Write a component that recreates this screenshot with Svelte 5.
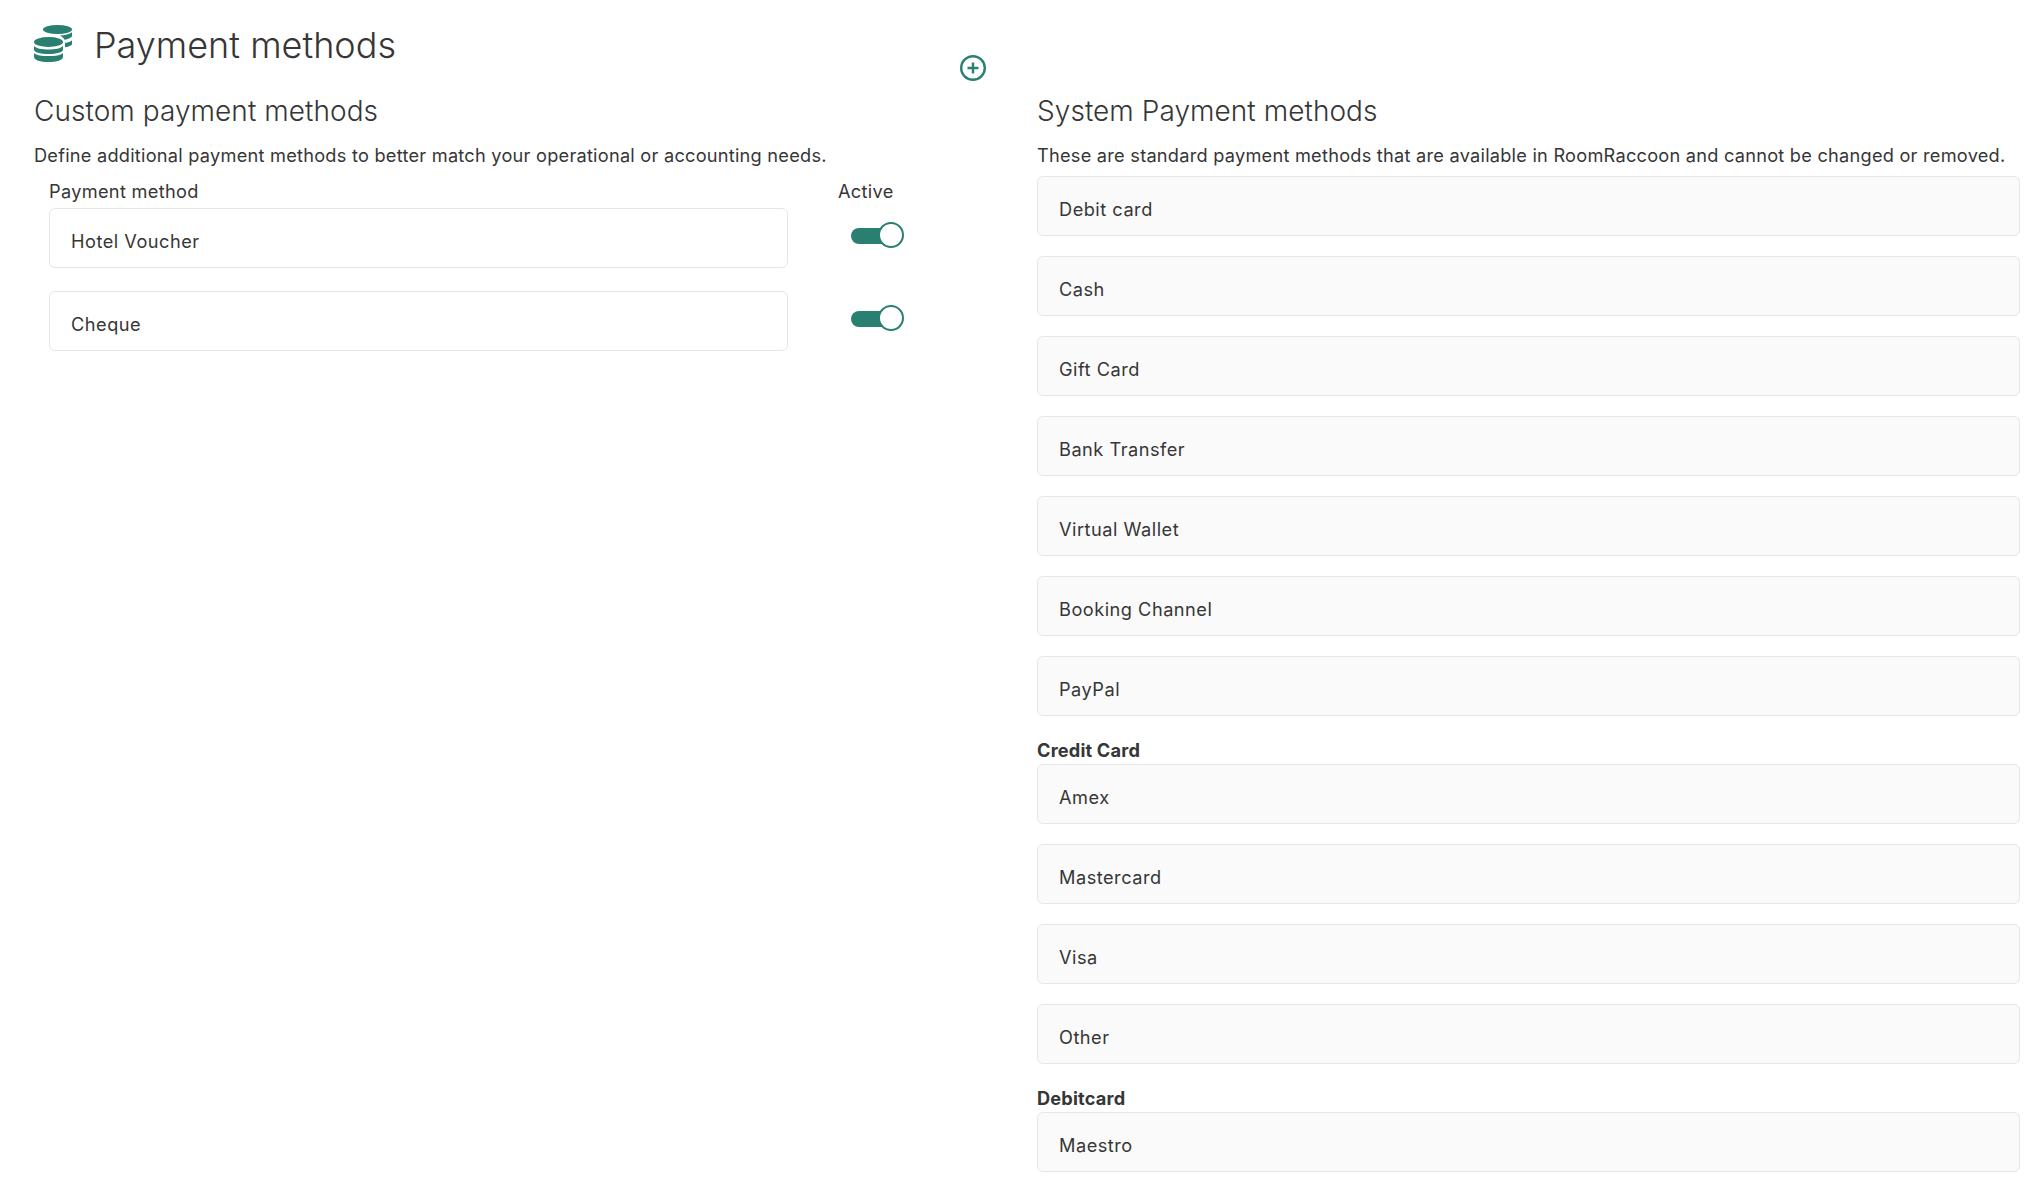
<script>
  const customMethods = ['Hotel Voucher', 'Cheque']
  const systemMethods = ['Debit card', 'Cash', 'Gift Card', 'Bank Transfer', 'Virtual Wallet', 'Booking Channel', 'PayPal']
  const creditCards = ['Amex', 'Mastercard', 'Visa', 'Other']
  const debitCards = ['Maestro']
</script>

<main class="page">
  <header class="page-header">
    <div class="page-title">
      <svg class="coins" viewBox="0 0 40 40" aria-hidden="true">
        <ellipse cx="23.500" cy="4.500" rx="14.500" ry="4.500" />
        <path d="M26 10.500c5-.3 9.500-1.300 12-3.300V11c0 1.500-2.800 2.900-7.500 3.800-.8-1.800-2.300-3.200-4.500-4.300z" />
        <path d="M31 18c3-.6 5.600-1.500 7-2.800V19c0 1.300-2.700 2.600-7 3.300z" />
        <ellipse cx="14.500" cy="17" rx="14.500" ry="5" />
        <path d="M0 21c2 2.500 8 3.500 14.500 3.500S27 23.500 29 21v3.500c0 2.800-6.500 4.500-14.500 4.500S0 27.300 0 24.500z" />
        <path d="M0 28c2 2.500 8 3 14.500 3S27 30.500 29 28v4c0 3-6.500 5-14.500 5S0 35 0 32z" />
      </svg>
      <h1>Payment methods</h1>
    </div>
    <button class="add" aria-label="Add payment method">
      <svg viewBox="0 0 26 26">
        <circle cx="13" cy="13" r="11.800" />
        <path d="M13 7.500v11M7.500 13h11" />
      </svg>
    </button>
  </header>

  <section class="custom">
    <h2>Custom payment methods</h2>
    <p>Define additional payment methods to better match your operational or accounting needs.</p>
    <div class="custom-table">
      <span class="label">Payment method</span>
      <span class="label">Active</span>
      {#each customMethods as method}
        <div class="field">{method}</div>
        <div class="toggle"><span class="track"></span><span class="knob"></span></div>
      {/each}
    </div>
  </section>

  <section class="system">
    <h2>System Payment methods</h2>
    <p>These are standard payment methods that are available in RoomRaccoon and cannot be changed or removed.</p>
    <div class="list">
      {#each systemMethods as method}
        <div class="field readonly">{method}</div>
      {/each}
    </div>
    <h3>Credit Card</h3>
    <div class="list">
      {#each creditCards as method}
        <div class="field readonly">{method}</div>
      {/each}
    </div>
    <h3>Debitcard</h3>
    <div class="list">
      {#each debitCards as method}
        <div class="field readonly">{method}</div>
      {/each}
    </div>
  </section>
</main>

<style>
  :global(body) {
    margin: 0;
    background: #fff;
    color: #363636;
    font-family: Inter, "Liberation Sans", sans-serif;
  }
  .page {
    display: grid;
    grid-template-columns: 1003px 983px;
    align-content: start;
    padding: 24px 22px 0 34px;
    height: 1200px;
    overflow: hidden;
    box-sizing: border-box;
  }
  .page-header {
    grid-column: 1;
    display: flex;
    justify-content: space-between;
    align-items: flex-start;
    width: 952px;
    height: 67px;
  }
  .page-title {
    display: flex;
    align-items: center;
    gap: 20px;
  }
  .coins {
    width: 40px;
    height: 40px;
    fill: #2a8070;
  }
  h1 {
    margin: 0;
    font-size: 36px;
    line-height: 42px;
    font-weight: 300;
  }
  .add {
    margin-top: 31px;
    padding: 0;
    border: none;
    background: none;
    width: 26px;
    height: 26px;
  }
  .add svg {
    display: block;
    fill: none;
    stroke: #2a8070;
    stroke-width: 2.4;
  }
  .custom {
    grid-column: 1;
    grid-row: 2;
  }
  .system {
    grid-column: 2;
    grid-row: 2;
  }
  h2 {
    margin: 0;
    font-size: 28px;
    line-height: 40px;
    font-weight: 300;
    letter-spacing: 0.06px;
  }
  p {
    margin: 12px 0 0;
    font-size: 18.2px;
    line-height: 24px;
    letter-spacing: 0.24px;
  }
  .custom-table {
    display: grid;
    grid-template-columns: 739px 100px;
    column-gap: 50px;
    margin: 12px 0 0 15px;
  }
  .label {
    font-size: 18.2px;
    line-height: 24px;
    height: 29px;
    letter-spacing: 0.31px;
  }
  .field {
    display: flex;
    align-items: center;
    box-sizing: border-box;
    height: 60px;
    padding: 5px 21px 0;
    border: 1px solid #e6e6e6;
    border-radius: 6px;
    font-size: 18.2px;
    letter-spacing: 0.5px;
    margin-bottom: 23px;
  }
  .readonly {
    background: #fafafa;
    margin-bottom: 20px;
  }
  .toggle {
    position: relative;
    width: 53px;
    height: 28px;
    margin: 14px 0 0 13px;
  }
  .track {
    position: absolute;
    left: 0;
    top: 6px;
    width: 40px;
    height: 16px;
    border-radius: 8px;
    background: #2a8070;
  }
  .knob {
    position: absolute;
    right: 0;
    top: 0;
    box-sizing: border-box;
    width: 26px;
    height: 26px;
    border: 2px solid #2a8070;
    border-radius: 50%;
    background: #fff;
  }
  .list {
    margin-top: 9px;
  }
  .system h3 + .list {
    margin-top: 0;
  }
  h3 {
    margin: 0;
    font-size: 18.2px;
    line-height: 28px;
    font-weight: 700;
    letter-spacing: 0.18px;
  }
</style>
